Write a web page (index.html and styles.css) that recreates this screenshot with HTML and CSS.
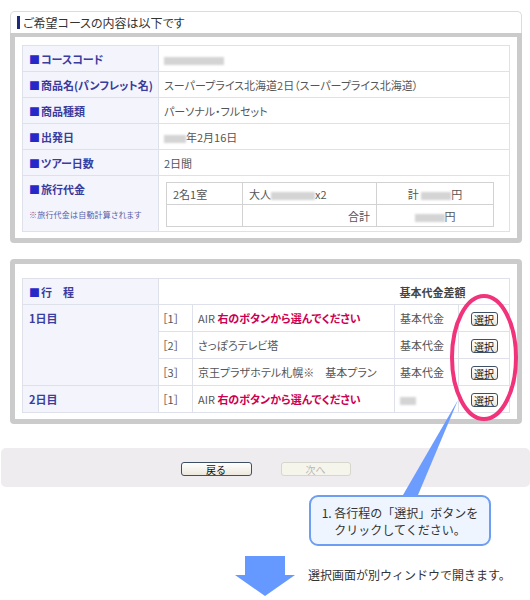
FILE: index.html
```html
<!DOCTYPE html>
<html lang="ja">
<head>
<meta charset="utf-8">
<link rel="stylesheet" href="styles.css">
</head>
<body>
<div class="page">
  <section class="panel">
    <div class="panel-head"><span class="head-bar"></span>ご希望コースの内容は以下です</div>
    <div class="frame frame-first">
      <table class="info">
        <colgroup><col class="c-label"><col></colgroup>
        <tr class="irow"><th><span class="sq">■</span>コースコード</th><td><span class="blur b60"></span></td></tr>
        <tr class="irow"><th><span class="sq">■</span>商品名(パンフレット名)</th><td>スーパープライス北海道2日（スーパープライス北海道）</td></tr>
        <tr class="irow"><th><span class="sq">■</span>商品種類</th><td>パーソナル・フルセット</td></tr>
        <tr class="irow"><th><span class="sq">■</span>出発日</th><td><span class="blur b22"></span>年2月16日</td></tr>
        <tr class="irow"><th><span class="sq">■</span>ツアー日数</th><td>2日間</td></tr>
        <tr class="tall">
          <th class="top"><span class="sq">■</span>旅行代金<div class="note">※旅行代金は自動計算されます</div></th>
          <td class="price-cell">
            <table class="price">
              <colgroup><col class="p1"><col class="p2"><col></colgroup>
              <tr><td>2名1室</td><td>大人<span class="blur b44"></span>x2</td><td class="c">計 <span class="blur b30"></span>円</td></tr>
              <tr><td></td><td class="r">合計</td><td class="c"><span class="blur b30"></span>円</td></tr>
            </table>
          </td>
        </tr>
      </table>
    </div>
  </section>

  <section class="panel panel-second">
    <div class="frame frame-second">
      <table class="itin">
        <colgroup><col class="c-label"><col class="c-no"><col class="c-body"><col class="c-fee"><col class="c-btn"></colgroup>
        <tr class="ihead"><th><span class="sq">■</span>行　程</th><td colspan="2" class="blank"></td><td colspan="2" class="diff">基本代金差額</td></tr>
        <tr><th rowspan="3" class="day">1日目</th><td class="no">［1］</td><td>AIR <span class="warn">右のボタンから選んでください</span></td><td>基本代金</td><td class="btn-cell"><button class="sel">選択</button></td></tr>
        <tr><td class="no">［2］</td><td>さっぽろテレビ塔</td><td>基本代金</td><td class="btn-cell"><button class="sel">選択</button></td></tr>
        <tr><td class="no">［3］</td><td>京王プラザホテル札幌※　基本プラン</td><td>基本代金</td><td class="btn-cell"><button class="sel">選択</button></td></tr>
        <tr><th class="day">2日目</th><td class="no">［1］</td><td>AIR <span class="warn">右のボタンから選んでください</span></td><td><span class="blur b16"></span></td><td class="btn-cell"><button class="sel">選択</button></td></tr>
      </table>
    </div>
  </section>

  <div class="btnbar">
    <button class="nav">戻る</button>
    <button class="nav off" disabled>次へ</button>
  </div>

  <svg class="pointer" width="62" height="100" viewBox="0 0 62 100"><polygon points="58,2 3,97 18,97" fill="#6d9cff"/></svg>
  <svg class="ring" width="72" height="131" viewBox="0 0 72 131"><ellipse cx="36" cy="65.5" rx="32" ry="61.5" fill="none" stroke="#f0337b" stroke-width="4"/></svg>

  <div class="callout">1. 各行程の「選択」ボタンを<br>クリックしてください。</div>

  <div class="next-row">
    <svg class="arrow" width="60" height="40" viewBox="0 0 60 40"><polygon points="10,0 50,0 50,19 60,19 30,40 0,19 10,19" fill="#6699ff"/></svg>
    <p class="next-text">選択画面が別ウィンドウで開きます。</p>
  </div>
</div>
</body>
</html>
```

FILE: styles.css
```css
html, body {
  margin: 0;
  padding: 0;
  background: #fff;
}
body {
  font-family: "Noto Sans CJK JP", "Liberation Sans", sans-serif;
  font-size: 11px;
  color: #555;
}
.page {
  position: relative;
  width: 530px;
  height: 600px;
  overflow: hidden;
  padding-top: 11px;
  box-sizing: border-box;
}
.panel {
  width: 512px;
  margin-left: 10px;
}
.panel-second {
  margin-top: 16px;
}
.panel-head {
  height: 21px;
  border: 1px solid #dcdcdc;
  border-bottom: none;
  border-radius: 5px 5px 0 0;
  display: flex;
  align-items: center;
  font-size: 12px;
  color: #333;
  font-feature-settings: "palt";
  line-height: 1;
}
.head-bar {
  width: 3px;
  height: 13px;
  background: #1c2a80;
  margin: 0 3px 0 6px;
}
.frame {
  border: 5px solid #cbcbcb;
  padding: 8px 7px 6px;
  background: #fff;
}
.frame-first {
  border-top-width: 4px;
  border-radius: 0 0 4px 4px;
}
.frame-second {
  padding-top: 14px;
  border-radius: 4px;
}
table {
  border-collapse: collapse;
  table-layout: fixed;
}
.info, .itin {
  width: 488px;
}
.info > tbody > tr > th, .info > tbody > tr > td, .itin th, .itin td {
  border: 1px solid #dfe1ea;
  padding: 0 5px;
  text-align: left;
  vertical-align: middle;
  line-height: 14px;
  font-feature-settings: "palt";
}
.c-label { width: 136px; }
.irow { height: 26px; }
.tall { height: 56px; }
th {
  background: #f4f5fc;
  color: #3a3c9e;
  font-weight: bold;
}
.info > tbody > tr > th, .itin th { padding-left: 6px; }
.sq {
  color: #2828c8;
  margin-right: 1px;
}
th.top {
  vertical-align: top !important;
  padding-top: 6px !important;
}
.note {
  font-size: 8px;
  font-weight: normal;
  color: #5a5fa8;
  margin-top: 12px;
  letter-spacing: 0.2px;
}
.price-cell {
  vertical-align: top !important;
  padding: 6px 0 0 7px !important;
}
.price {
  width: 328px;
}
.p1 { width: 76px; }
.p2 { width: 134px; }
.price td {
  border: 1px solid #d2d2d2;
  height: 21px;
  padding: 0 6px;
  line-height: 14px;
  vertical-align: middle;
  font-feature-settings: "palt";
}
.price td.c { text-align: center; }
.price td.r { text-align: right; }
.blur {
  display: inline-block;
  height: 8px;
  background: #d4d4d4;
  filter: blur(1.2px);
  vertical-align: middle;
}
.b60 { width: 60px; }
.b22 { width: 22px; }
.b44 { width: 44px; }
.b30 { width: 30px; }
.b16 { width: 16px; }

.c-no { width: 34px; }
.c-body { width: 202px; }
.c-fee { width: 64px; }
.itin tr { height: 27px; }
.itin tr.ihead { height: 26px; }
.itin td.blank { border-right: hidden; }
.itin td.diff {
  border-left: hidden;
  font-weight: bold;
  color: #444;
}
th.day {
  vertical-align: top !important;
  padding-top: 6px !important;
}
.itin td.no {
  padding-left: 3px;
  letter-spacing: 0;
}
.warn {
  color: #cc0050;
  font-weight: bold;
}
.btn-cell { text-align: center !important; padding: 0 !important; }
.sel {
  width: 27px;
  height: 14px;
  padding: 0;
  border: 1px solid #3e5066;
  border-radius: 3px;
  background: linear-gradient(#ffffff, #ebe8dc);
  font-family: inherit;
  font-size: 10px;
  line-height: 11px;
  color: #111;
  vertical-align: middle;
}

.btnbar {
  width: 529px;
  height: 39px;
  margin: 24px 0 0 1px;
  box-sizing: border-box;
  padding-top: 14px;
  background: #efecef;
  border-radius: 5px;
  display: flex;
  justify-content: center;
  align-items: flex-start;
  gap: 29px;
}
.nav {
  width: 71px;
  height: 14px;
  padding: 0;
  border: 1px solid #3e5066;
  border-radius: 3px;
  background: linear-gradient(#ffffff, #ece8dc);
  font-family: inherit;
  font-size: 10px;
  line-height: 11px;
  color: #111;
}
.nav.off {
  width: 70px;
  border-color: #d6d6cc;
  background: #f6f5ec;
  color: #b8b8b8;
}

.pointer {
  position: absolute;
  left: 400px;
  top: 398px;
}
.ring {
  position: absolute;
  left: 448px;
  top: 292px;
}
.callout {
  position: relative;
  z-index: 1;
  box-sizing: border-box;
  width: 182px;
  height: 51px;
  margin: 8px 0 0 309px;
  padding-top: 7px;
  border: 2px solid #6d9ef2;
  border-radius: 9px;
  background: #eef5fe;
  text-align: center;
  font-size: 12px;
  line-height: 17px;
  color: #333;
}
.next-row {
  display: flex;
  align-items: center;
  gap: 13px;
  margin: 10px 0 0 235px;
}
.arrow { display: block; }
.next-text {
  margin: 0 0 4px;
  font-size: 12px;
  color: #333;
}
```
